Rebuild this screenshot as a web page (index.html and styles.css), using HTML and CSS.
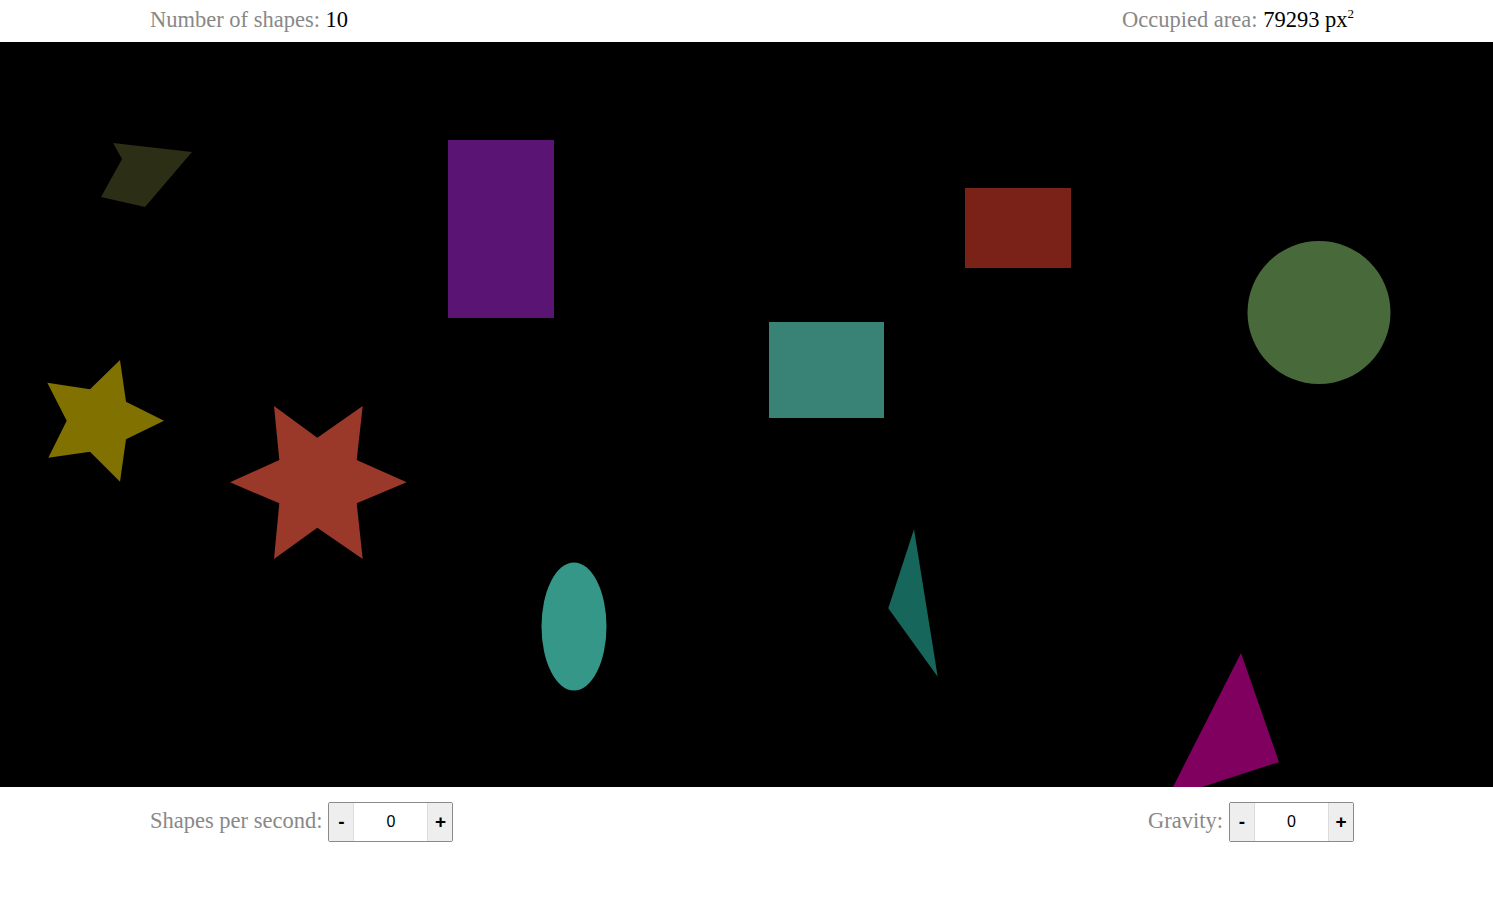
FILE: index.html
```html
<!DOCTYPE html>
<html>
<head>
<meta charset="utf-8">
<link rel="stylesheet" href="styles.css">
</head>
<body>
<header class="bar top">
  <div class="stat"><span class="label">Number of shapes:</span> <span class="value">10</span></div>
  <div class="stat"><span class="label">Occupied area:</span> <span class="value">79293 px<sup>2</sup></span></div>
</header>
<main class="stage">
  <svg class="canvas" width="1493" height="745" viewBox="0 0 1493 745">
    <rect x="0" y="0" width="1493" height="745" fill="#000"/>
    <polygon points="113,101 192,110 145,165 101,155 122,117" fill="#2c2e16"/>
    <rect x="448" y="98" width="106" height="178" fill="#5a1574"/>
    <rect x="965" y="146" width="106" height="80" fill="#7a2118"/>
    <circle cx="1319" cy="270.5" r="71.5" fill="#486a3a"/>
    <rect x="769" y="280" width="115" height="96" fill="#388375"/>
    <polygon points="120,318 126,359.7 164,378.7 126,397.3 120,439.7 90,409.7 48.3,415.7 66.7,378.7 47.3,340.7 90,347.3" fill="#807100"/>
    <polygon points="274,364 317.3,395.7 362.7,364 356.7,418 406.7,440.3 356.7,461.3 362.7,517 317.3,485.7 274,517 279.3,461.3 230,440.3 279.3,418" fill="#9a392a"/>
    <ellipse cx="574" cy="584.5" rx="32.5" ry="64" fill="#359787"/>
    <polygon points="914,487.3 888.3,566.3 937.7,634.7" fill="#17665c"/>
    <polygon points="1241,611 1279,720 1202,745 1173,745" fill="#800060"/>
  </svg>
</main>
<footer class="bar bottom">
  <div class="control">
    <span class="label">Shapes per second:</span>
    <div class="spinner">
      <button class="btn">-</button>
      <input class="num" type="text" value="0">
      <button class="btn">+</button>
    </div>
  </div>
  <div class="control">
    <span class="label">Gravity:</span>
    <div class="spinner">
      <button class="btn">-</button>
      <input class="num" type="text" value="0">
      <button class="btn">+</button>
    </div>
  </div>
</footer>
</body>
</html>
```
FILE: styles.css
```css
html, body {
  margin: 0;
  padding: 0;
  background: #fff;
}
body {
  font-family: "Liberation Serif", "Times New Roman", serif;
  font-size: 22.5px;
}
.bar {
  margin: 0 139px 0 150px;
  display: flex;
  justify-content: space-between;
  align-items: center;
}
.top {
  height: 42px;
  padding-bottom: 2px;
  box-sizing: border-box;
}
.label {
  color: #888;
}
.value {
  color: #000;
}
.value sup {
  font-size: 13px;
  vertical-align: 9px;
  line-height: 0;
}
.stage {
  display: block;
  height: 745px;
  background: #000;
}
.canvas {
  display: block;
}
.bottom {
  padding-top: 15px;
}
.control {
  display: flex;
  align-items: center;
  gap: 6px;
}
.control .label {
  margin-top: -2px;
}
.spinner {
  display: flex;
  height: 40px;
  width: 125px;
  box-sizing: border-box;
  border: 1px solid #8a8a8a;
  border-radius: 2px;
  overflow: hidden;
}
.btn {
  width: 25px;
  border: 0;
  margin: 0;
  padding: 0;
  background: #eeeeee;
  font-family: "Liberation Sans", Arial, sans-serif;
  font-weight: bold;
  font-size: 19px;
  color: #000;
}
.num {
  width: 73px;
  border: 0;
  border-left: 1px solid #dcdcdc;
  border-right: 1px solid #dcdcdc;
  margin: 0;
  padding: 0;
  text-align: center;
  font-family: "Liberation Sans", Arial, sans-serif;
  font-size: 16px;
  color: #000;
  background: #fff;
  outline: none;
}
```
